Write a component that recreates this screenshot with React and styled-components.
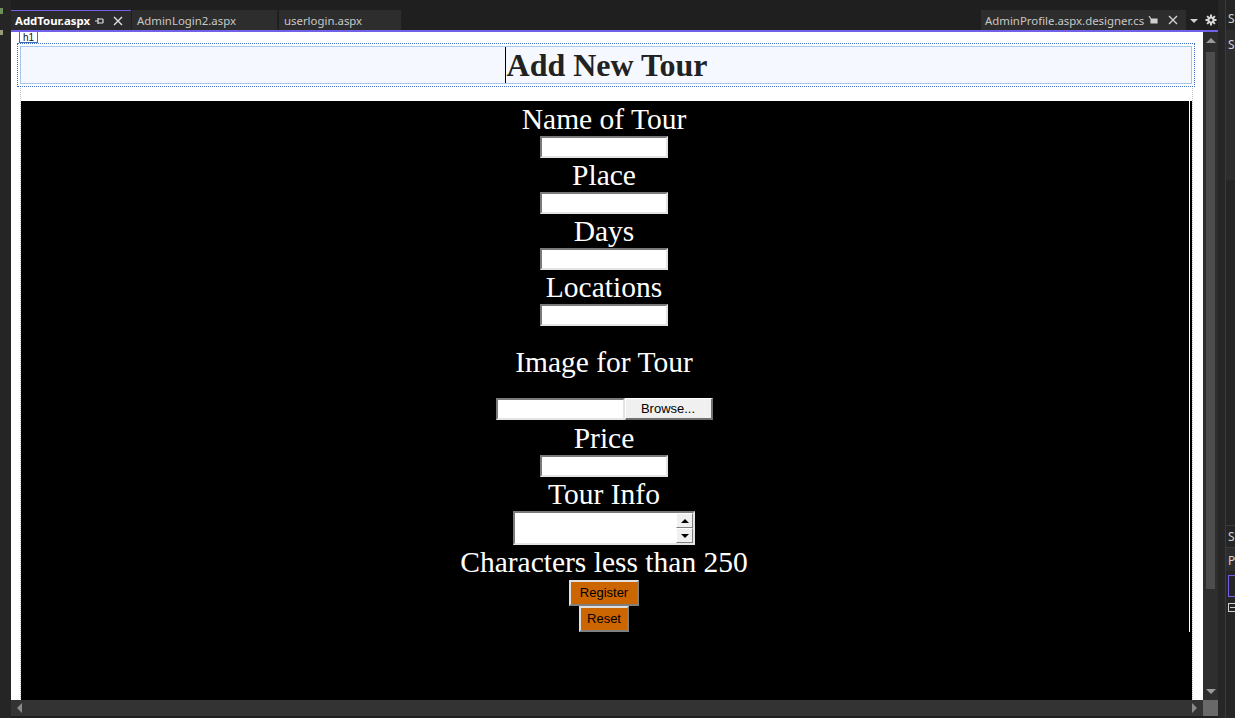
import styled, { createGlobalStyle } from 'styled-components';

// global
const GlobalStyle = createGlobalStyle`
    html, body {
        margin: 0;
        padding: 0;
        background: #1f1f1f;
        overflow: hidden;
    }
    * { box-sizing: border-box; }
`;

const Shell = styled.div`
    display: flex;
    width: 1235px;
    height: 718px;
    background: #1f1f1f;
    font-family: "Noto Sans", "Liberation Sans", sans-serif;
`;

const LeftRail = styled.div`
    width: 11px;
    background: #252526;
    padding-top: 8px;
    display: flex;
    flex-direction: column;
    gap: 16px;
`;

const RailMark = styled.div`
    width: 3px;
    height: ${(p) => p.$h || 4}px;
    background: ${(p) => p.$c || '#8a9a6a'};
`;

const Main = styled.div`
    width: 1207px;
    display: flex;
    flex-direction: column;
`;

// tabs
const TabBar = styled.div`
    height: 30px;
    padding-top: 10px;
    display: flex;
    align-items: stretch;
`;

const Tab = styled.div`
    height: 20px;
    width: ${(p) => p.$w}px;
    margin-right: ${(p) => p.$mr ?? 2}px;
    display: flex;
    align-items: center;
    padding-left: ${(p) => p.$pl || 5}px;
    background: ${(p) => (p.$active ? '#2b2b2e' : '#2d2d2d')};
    border-top: ${(p) => (p.$active ? '1px solid #7160e8' : 'none')};
    color: ${(p) => (p.$active ? '#ffffff' : '#c8c8c8')};
    font-weight: ${(p) => (p.$active ? 700 : 400)};
    font-size: 11.4px;
    white-space: nowrap;
`;

const TabSpacer = styled.div`
    flex: 1;
`;

const TabText = styled.span`
    flex: 1;
`;

const TabIcons = styled.span`
    display: flex;
    align-items: center;
    gap: 9px;
    margin-right: 8px;
`;

const TabTools = styled.div`
    display: flex;
    align-items: center;
    gap: 7px;
    padding: 0 1px 0 4px;
    height: 20px;
`;

const Caret = styled.div`
    width: 0;
    height: 0;
    border-left: 4px solid transparent;
    border-right: 4px solid transparent;
    border-top: 4px solid #d0d0d0;
    margin-top: 2px;
`;

const ActiveLine = styled.div`
    height: 2px;
    background: #7160e8;
`;

// editor
const EditorRow = styled.div`
    display: flex;
    height: 668px;
`;

const Canvas = styled.div`
    width: 1192px;
    background: #ffffff;
    overflow: hidden;
    padding: 0 8px 0 6px;
`;

const TagRow = styled.div`
    height: 11px;
    display: flex;
`;

const TagLabel = styled.div`
    margin-left: 2px;
    height: 11px;
    padding: 0 3px;
    border: 1px solid #3a6fc0;
    border-top: none;
    font-family: "Liberation Sans", Arial, sans-serif;
    font-size: 10px;
    line-height: 11px;
    color: #111;
`;

const HeadingFrame = styled.div`
    border: 1px dotted #3c6fc4;
    padding: 2px;
`;

const Heading = styled.h1`
    margin: 0;
    height: 38px;
    background: #f5f9ff;
    border: 1px solid #a6c8ee;
    text-align: center;
    font-family: "Liberation Serif", "Times New Roman", serif;
    font-size: 32px;
    font-weight: 700;
    line-height: 37px;
    color: #222;
`;

const Cursor = styled.span`
    display: inline-block;
    width: 1px;
    height: 36px;
    margin-right: 1px;
    background: #000;
    vertical-align: top;
`;

const Wrapper = styled.div`
    margin: 1px 2px 0 3px;
    padding-top: 13px;
    border-left: 1px dotted #c0c0c0;
    border-right: 1px dotted #c0c0c0;
`;

const BlackPanel = styled.div`
    background: #000;
    height: 620px;
    padding-right: 2px;
`;

const Form = styled.div`
    height: 531px;
    border-right: 1px solid #ffffff;
    padding: 1px 2px 0 0;
    display: flex;
    flex-direction: column;
    align-items: center;
`;

const Label = styled.div`
    height: 34px;
    line-height: 34px;
    font-family: "Liberation Serif", "Times New Roman", serif;
    font-size: 29.5px;
    color: #fff;
    white-space: nowrap;
    margin: ${(p) => p.$m || '0'};
`;

const TextBox = styled.input`
    display: block;
    width: ${(p) => p.$w || 128}px;
    height: 22px;
    background: #fff;
    border-style: solid;
    border-width: 2px;
    border-color: #7a7a7a #e4e4e4 #e4e4e4 #7a7a7a;
    outline: none;
    padding: 0;
`;

const FileRow = styled.div`
    display: flex;
    height: 22px;
    margin-bottom: 1px;
`;

const BrowseButton = styled.div`
    width: 88px;
    height: 22px;
    background: #f0f0f0;
    border-style: solid;
    border-width: 1px 2px 2px 1px;
    border-color: #ffffff #707070 #707070 #ffffff;
    font-family: "Liberation Sans", Arial, sans-serif;
    font-size: 13px;
    line-height: 19px;
    text-align: center;
    color: #000;
`;

const MultiBox = styled.div`
    width: 182px;
    height: 34px;
    display: flex;
    background: #fff;
    border-style: solid;
    border-width: 2px;
    border-color: #7a7a7a #e4e4e4 #e4e4e4 #7a7a7a;
    justify-content: flex-end;
`;

const SpinCol = styled.div`
    width: 17px;
    display: flex;
    flex-direction: column;
`;

const SpinButton = styled.div`
    flex: 1;
    background: #f0f0f0;
    border-style: solid;
    border-width: 1px;
    border-color: #ffffff #808080 #808080 #ffffff;
    display: flex;
    align-items: center;
    justify-content: center;
`;

const Arrow = styled.div`
    width: 0;
    height: 0;
    border-left: ${(p) => p.$s || 4}px solid transparent;
    border-right: ${(p) => p.$s || 4}px solid transparent;
    ${(p) =>
        p.$down
            ? `border-top: ${p.$s || 4}px solid ${p.$c || '#000'};`
            : `border-bottom: ${p.$s || 4}px solid ${p.$c || '#000'};`}
`;

const SideArrow = styled.div`
    width: 0;
    height: 0;
    border-top: 5px solid transparent;
    border-bottom: 5px solid transparent;
    ${(p) =>
        p.$right
            ? 'border-left: 5px solid #8a8a8a;'
            : 'border-right: 5px solid #8a8a8a;'}
`;

const OrangeButton = styled.div`
    width: ${(p) => p.$w}px;
    height: 26px;
    margin-top: ${(p) => p.$mt || 0}px;
    background: #cc6600;
    border-style: solid;
    border-width: 2px;
    border-color: #e0e0e0 #808080 #808080 #e0e0e0;
    font-family: "Liberation Sans", Arial, sans-serif;
    font-size: 13px;
    line-height: 22px;
    text-align: center;
    color: #000;
`;

// scrollbars
const VScroll = styled.div`
    width: 15px;
    background: #2e2e2e;
    display: flex;
    flex-direction: column;
    align-items: center;
    padding-top: 6px;
`;

const VThumb = styled.div`
    width: 9px;
    height: 537px;
    margin-top: 9px;
    background: #4d4d4d;
`;

const VSpacer = styled.div`
    flex: 1;
`;

const VBottom = styled.div`
    height: 6px;
`;

const HScrollRow = styled.div`
    height: 16px;
    display: flex;
`;

const HScroll = styled.div`
    width: 1192px;
    background: #333333;
    display: flex;
    align-items: center;
    justify-content: space-between;
    padding: 0 6px;
`;

const Corner = styled.div`
    width: 15px;
    background: #686868;
`;

const RightPanel = styled.div`
    width: 17px;
    background: #1f1f1f;
    display: flex;
`;

const PanelGap = styled.div`
    width: 7px;
    background: #262626;
`;

const PanelBody = styled.div`
    width: 10px;
    border-left: 1px solid #3a3a3a;
    background: #252526;
    display: flex;
    flex-direction: column;
    font-size: 12px;
    color: #d0d0d0;
    overflow: hidden;
`;

const PanelLetter = styled.div`
    height: ${(p) => p.$h}px;
    padding-left: 2px;
    padding-top: ${(p) => p.$pt || 0}px;
    background: ${(p) => p.$bg || 'transparent'};
    border-top: ${(p) => (p.$line ? '1px solid #3a3a3a' : 'none')};
`;

const PurpleBox = styled.div`
    height: 22px;
    margin: 4px 0 0 2px;
    border: 1px solid #7160e8;
    border-right: none;
`;

const CollapseBox = styled.div`
    width: 9px;
    height: 9px;
    margin: 6px 0 0 2px;
    border: 1px solid #d0d0d0;
    border-right: none;
    display: flex;
    align-items: center;

    &::after {
        content: '';
        display: block;
        width: 6px;
        height: 1px;
        margin-left: 1px;
        background: #d0d0d0;
    }
`;

function PinIcon({ color = '#e0e0e0' }) {
    return (
        <svg width="10" height="10" viewBox="0 0 10 10">
            <path d="M1 5h3M4 2v6M4 3h5M4 7h5M9 3v4" stroke={color} strokeWidth="1.2" fill="none" />
        </svg>
    );
}

function CloseIcon({ color = '#e0e0e0' }) {
    return (
        <svg width="10" height="10" viewBox="0 0 10 10">
            <path d="M1 1L9 9M9 1L1 9" stroke={color} strokeWidth="1.4" />
        </svg>
    );
}

function DockPinIcon() {
    return (
        <svg width="12" height="10" viewBox="0 0 12 10">
            <path d="M2 1l2 3h6v4H4V4" stroke="#d0d0d0" strokeWidth="1.2" fill="none" />
            <rect x="4" y="4" width="6" height="4" fill="#d0d0d0" />
        </svg>
    );
}

function GearIcon() {
    return (
        <svg width="12" height="12" viewBox="0 0 12 12">
            <g stroke="#d8d8d8" strokeWidth="2">
                <path d="M6 0.5v11M0.5 6h11M2.1 2.1l7.8 7.8M9.9 2.1l-7.8 7.8" />
            </g>
            <circle cx="6" cy="6" r="3.6" fill="#d8d8d8" />
            <circle cx="6" cy="6" r="1.5" fill="#1f1f1f" />
        </svg>
    );
}

function App() {
    return (
        <>
            <GlobalStyle />
            <Shell>
                <LeftRail>
                    <RailMark $c="#6f8f5a" $h={6} />
                    <RailMark $c="#9a9a7a" $h={5} />
                </LeftRail>

                <Main>
                    <TabBar>
                        <Tab $active $w={120} $mr={1} $pl={4}>
                            <TabText>AddTour.aspx</TabText>
                            <TabIcons>
                                <PinIcon />
                                <CloseIcon />
                            </TabIcons>
                        </Tab>
                        <Tab $w={145}>AdminLogin2.aspx</Tab>
                        <Tab $w={122}>userlogin.aspx</Tab>
                        <TabSpacer />
                        <Tab $w={205} $mr={0} $pl={4}>
                            <TabText>AdminProfile.aspx.designer.cs</TabText>
                            <TabIcons>
                                <DockPinIcon />
                                <CloseIcon color="#d0d0d0" />
                            </TabIcons>
                        </Tab>
                        <TabTools>
                            <Caret />
                            <GearIcon />
                        </TabTools>
                    </TabBar>
                    <ActiveLine />

                    <EditorRow>
                        <Canvas>
                            <TagRow>
                                <TagLabel>h1</TagLabel>
                            </TagRow>
                            <HeadingFrame>
                                <Heading>
                                    <Cursor />
                                    Add New Tour
                                </Heading>
                            </HeadingFrame>

                            <Wrapper>
                                <BlackPanel>
                                    <Form>
                                        <Label>Name of Tour</Label>
                                        <TextBox readOnly />
                                        <Label>Place</Label>
                                        <TextBox readOnly />
                                        <Label>Days</Label>
                                        <TextBox readOnly />
                                        <Label>Locations</Label>
                                        <TextBox readOnly />
                                        <Label $m="19px 0 19px">Image for Tour</Label>
                                        <FileRow>
                                            <TextBox readOnly $w={129} />
                                            <BrowseButton>Browse...</BrowseButton>
                                        </FileRow>
                                        <Label>Price</Label>
                                        <TextBox readOnly />
                                        <Label>Tour Info</Label>
                                        <MultiBox>
                                            <SpinCol>
                                                <SpinButton>
                                                    <Arrow $s={4} />
                                                </SpinButton>
                                                <SpinButton>
                                                    <Arrow $s={4} $down />
                                                </SpinButton>
                                            </SpinCol>
                                        </MultiBox>
                                        <Label>Characters less than 250</Label>
                                        <OrangeButton $w={70} $mt={1}>Register</OrangeButton>
                                        <OrangeButton $w={50}>Reset</OrangeButton>
                                    </Form>
                                </BlackPanel>
                            </Wrapper>
                        </Canvas>

                        <VScroll>
                            <Arrow $s={5} $c="#9a9a9a" />
                            <VThumb />
                            <VSpacer />
                            <Arrow $s={5} $c="#9a9a9a" $down />
                            <VBottom />
                        </VScroll>
                    </EditorRow>

                    <HScrollRow>
                        <HScroll>
                            <SideArrow />
                            <SideArrow $right />
                        </HScroll>
                        <Corner />
                    </HScrollRow>
                </Main>

                <RightPanel>
                    <PanelGap />
                    <PanelBody>
                        <PanelLetter $h={30} $pt={10}>S</PanelLetter>
                        <PanelLetter $h={150} $pt={6} $bg="#2d2d30">S</PanelLetter>
                        <PanelLetter $h={345} />
                        <PanelLetter $h={22} $pt={2} $line>S</PanelLetter>
                        <PanelLetter $h={24} $pt={4} $line $bg="#2d2d30">P</PanelLetter>
                        <PurpleBox />
                        <CollapseBox />
                    </PanelBody>
                </RightPanel>
            </Shell>
        </>
    );
}

export default App;
